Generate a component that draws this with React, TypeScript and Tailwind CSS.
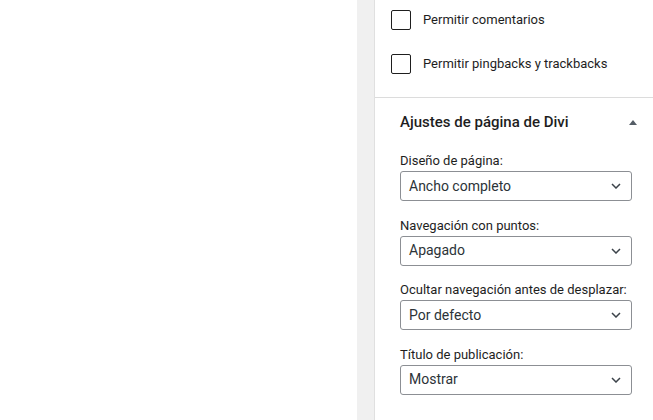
const fields = [
  { label: "Diseño de página:", value: "Ancho completo" },
  { label: "Navegación con puntos:", value: "Apagado" },
  { label: "Ocultar navegación antes de desplazar:", value: "Por defecto" },
  { label: "Título de publicación:", value: "Mostrar" },
];

function Checkbox({ label }: { label: string }) {
  return (
    <label className="flex h-[20px] items-center gap-[12px]">
      <span className="h-[20px] w-[20px] shrink-0 rounded-[2px] border border-[#1e1e1e] bg-white" />
      <span className="text-[13px] leading-[16px] text-[#1e1e1e]">{label}</span>
    </label>
  );
}

function Chevron() {
  return (
    <svg width="10" height="6" viewBox="0 0 10 6" fill="none" className="shrink-0">
      <path d="M1 1l4 4 4-4" stroke="#3c434a" strokeWidth="1.5" />
    </svg>
  );
}

function SelectField({ label, value }: { label: string; value: string }) {
  return (
    <div className="flex flex-col">
      <span className="h-[16px] text-[13px] leading-[16px] text-[#1e1e1e]">{label}</span>
      <div className="mt-[2px] flex h-[30px] items-center justify-between rounded-[3px] border border-[#8c8f94] pl-[8px] pr-[10px]">
        <span className="text-[14px] text-[#2c3338]">{value}</span>
        <Chevron />
      </div>
    </div>
  );
}

export default function App() {
  return (
    <div
      className="flex h-[420px] w-[653px] overflow-hidden bg-white"
      style={{ fontFamily: "Roboto, 'Noto Sans', sans-serif" }}
    >
      {/* editor canvas */}
      <div className="w-[357px] shrink-0 bg-white" />

      {/* scrollbar track */}
      <div className="w-[17px] shrink-0 bg-[#f0f0f0]" />

      {/* settings sidebar */}
      <aside className="flex flex-1 flex-col border-l border-[#e0e0e0] bg-white">
        {/* discussion */}
        <div className="flex flex-col gap-[24px] border-b border-[#dcdcdc] pb-[23px] pl-[16px] pt-[10px]">
          <Checkbox label="Permitir comentarios" />
          <Checkbox label="Permitir pingbacks y trackbacks" />
        </div>

        {/* Divi page settings */}
        <div className="flex flex-col">
          <div className="flex h-[48px] items-center justify-between pl-[25px] pr-[16px]">
            <span className="text-[15px] font-medium text-[#1e1e1e]">Ajustes de página de Divi</span>
            <svg width="8" height="5" viewBox="0 0 8 5">
              <path d="M4 0 8 5H0z" fill="#555d66" />
            </svg>
          </div>
          <div className="flex flex-col gap-[16.5px] pl-[25px] pr-[21px] pt-[7px]">
            {fields.map((f) => (
              <SelectField key={f.label} label={f.label} value={f.value} />
            ))}
          </div>
        </div>
      </aside>
    </div>
  );
}
